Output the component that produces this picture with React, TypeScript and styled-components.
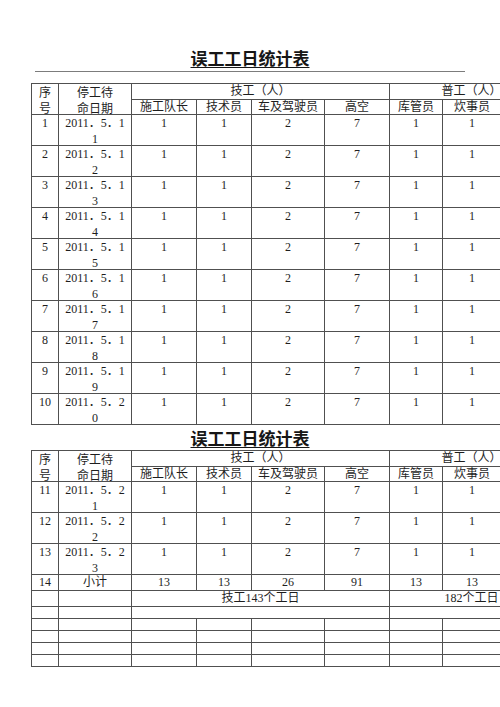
import styled, { createGlobalStyle } from "styled-components";

const GlobalStyle = createGlobalStyle`
  html, body {
    margin: 0;
    padding: 0;
    background: #ffffff;
    overflow: hidden;
  }
`;

const Page = styled.main`
  width: 500px;
  height: 707px;
  overflow: hidden;
  box-sizing: border-box;
  padding-top: 48px;
  font-family: "Liberation Serif", "Noto Sans CJK SC", serif;
  color: #1e1e1e;
`;

const Title = styled.h1<{ $gap: number }>`
  margin: ${(p) => p.$gap}px 0 0;
  text-align: center;
  font-family: "Noto Sans CJK SC", sans-serif;
  font-size: 17px;
  font-weight: 700;
  line-height: 20px;
  color: #161616;
  text-decoration: underline;
  text-decoration-thickness: 1px;
  text-underline-offset: 2px;
`;

const Rule = styled.hr`
  margin: 3px 35px 0;
  height: 0;
  border: 0;
  border-top: 1px solid #7c7c7c;
`;

const Sheet = styled.table<{ $gap: number }>`
  margin: ${(p) => p.$gap}px 0 0 31px;
  width: 522px;
  border-collapse: collapse;
  table-layout: fixed;
`;

const Col = styled.col<{ $w: number }>`
  width: ${(p) => p.$w}px;
`;

const Row = styled.tr<{ $h: number }>`
  height: ${(p) => p.$h}px;
  line-height: 13px;
`;

const Cell = styled.td<{ $top?: boolean }>`
  border: 1px solid #505050;
  padding: 0;
  text-align: center;
  vertical-align: ${(p) => (p.$top ? "top" : "middle")};
  font-size: 12px;
  font-weight: 400;
  white-space: nowrap;
`;

/* two text lines at a 16px pitch, kept inside a fixed box so the row keeps its height */
const Lines = styled.span<{ $box: number }>`
  display: block;
  height: ${(p) => p.$box}px;
  line-height: 16px;
`;

const widths = [27, 73, 65, 55, 73, 65, 53, 59, 52];
const jobs = ["施工队长", "技术员", "车及驾驶员", "高空", "库管员", "炊事员", ""];
const counts = ["1", "1", "2", "7", "1", "1", ""];

type DayRow = { seq: number; day: number };

const Head = () => (
  <>
    <colgroup>
      {widths.map((w, i) => (
        <Col key={i} $w={w} />
      ))}
    </colgroup>
    <thead>
      <Row $h={16}>
        <Cell rowSpan={2}>
          <Lines $box={29}>
            序<br />号
          </Lines>
        </Cell>
        <Cell rowSpan={2}>
          <Lines $box={29}>
            停工待
            <br />
            命日期
          </Lines>
        </Cell>
        <Cell colSpan={4}>技工（人）</Cell>
        <Cell colSpan={3}>普工（人）</Cell>
      </Row>
      <Row $h={15}>
        {jobs.map((j, i) => (
          <Cell key={i}>{j}</Cell>
        ))}
      </Row>
    </thead>
  </>
);

const DayLine = ({ seq, day }: DayRow) => {
  const d = String(day);
  return (
    <Row $h={31}>
      <Cell $top>
        <Lines $box={29}>{seq}</Lines>
      </Cell>
      <Cell $top>
        <Lines $box={29}>
          2011．5．{d[0]}
          <br />
          {d[1]}
        </Lines>
      </Cell>
      {counts.map((c, i) => (
        <Cell key={i} $top>
          <Lines $box={29}>{c}</Lines>
        </Cell>
      ))}
    </Row>
  );
};

const first: DayRow[] = Array.from({ length: 10 }, (_, i) => ({ seq: i + 1, day: 11 + i }));
const second: DayRow[] = Array.from({ length: 3 }, (_, i) => ({ seq: 11 + i, day: 21 + i }));

const App = () => (
  <Page>
    <GlobalStyle />
    <Title $gap={0}>误工工日统计表</Title>
    <Rule />
    <Sheet $gap={11}>
      <Head />
      <tbody>
        {first.map((r) => (
          <DayLine key={r.seq} {...r} />
        ))}
      </tbody>
    </Sheet>

    <Title $gap={3}>误工工日统计表</Title>
    <Sheet $gap={2}>
      <Head />
      <tbody>
        {second.map((r) => (
          <DayLine key={r.seq} {...r} />
        ))}
        <Row $h={16}>
          <Cell>14</Cell>
          <Cell>小计</Cell>
          {["13", "13", "26", "91", "13", "13", "13"].map((v, i) => (
            <Cell key={i}>{v}</Cell>
          ))}
        </Row>
        <Row $h={16}>
          <Cell />
          <Cell />
          <Cell colSpan={4}>技工143个工日</Cell>
          <Cell colSpan={3}>182个工日</Cell>
        </Row>
        <Row $h={12}>
          <Cell />
          <Cell />
          <Cell colSpan={4} />
          <Cell colSpan={3} />
        </Row>
        {Array.from({ length: 4 }, (_, r) => (
          <Row key={r} $h={12}>
            {widths.map((_, i) => (
              <Cell key={i} />
            ))}
          </Row>
        ))}
      </tbody>
    </Sheet>
  </Page>
);

export default App;
